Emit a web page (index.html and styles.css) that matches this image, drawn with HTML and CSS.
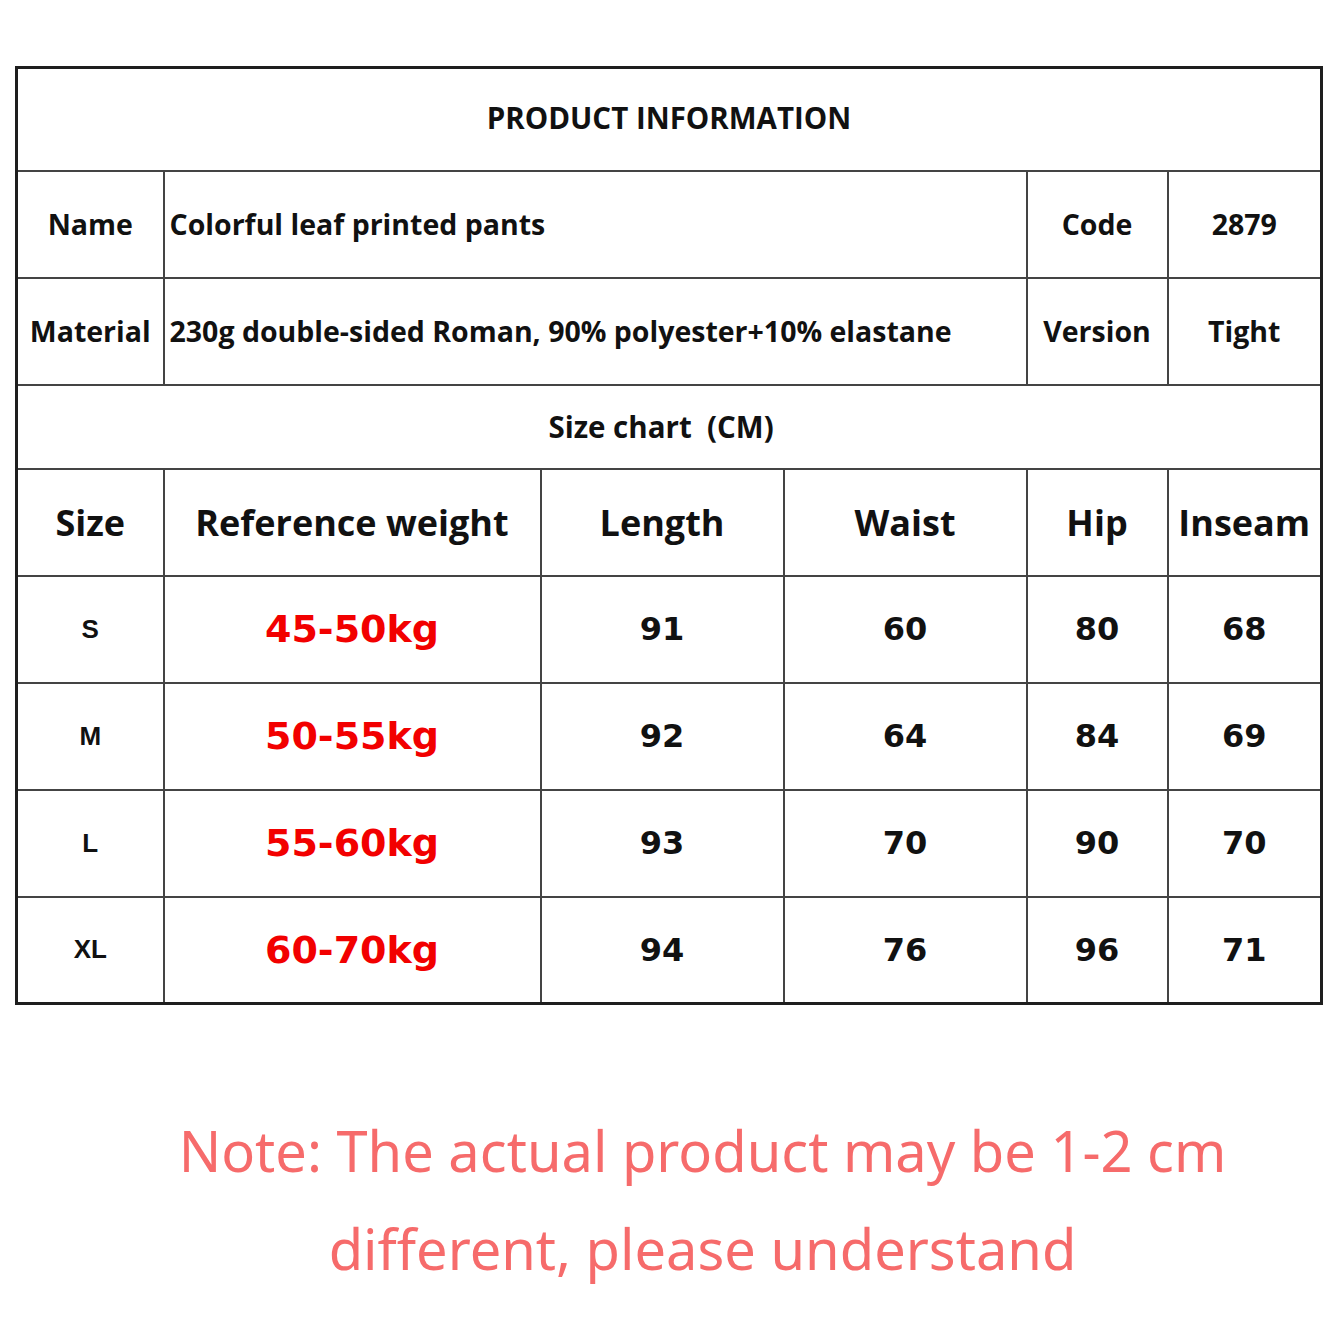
FILE: index.html
```html
<!DOCTYPE html>
<html>
<head>
<meta charset="utf-8">
<link rel="stylesheet" href="styles.css">
</head>
<body>
<div class="page">
<table class="chart">
<colgroup>
<col class="c1"><col class="c2"><col class="c3"><col class="c4"><col class="c5"><col class="c6">
</colgroup>
<tr class="r-title"><td colspan="6" class="title">PRODUCT INFORMATION</td></tr>
<tr class="r-info"><td class="lbl">Name</td><td colspan="3" class="val">Colorful leaf printed pants</td><td class="lbl">Code</td><td class="lbl">2879</td></tr>
<tr class="r-info"><td class="lbl">Material</td><td colspan="3" class="val">230g double-sided Roman, 90% polyester+10% elastane</td><td class="lbl">Version</td><td class="lbl">Tight</td></tr>
<tr class="r-sub"><td colspan="6" class="sub">Size chart&nbsp;&nbsp;(CM)</td></tr>
<tr class="r-head"><td>Size</td><td>Reference weight</td><td>Length</td><td>Waist</td><td>Hip</td><td>Inseam</td></tr>
<tr class="r-data"><td class="sz">S</td><td class="wt">45-50kg</td><td class="num">91</td><td class="num">60</td><td class="num">80</td><td class="num">68</td></tr>
<tr class="r-data"><td class="sz">M</td><td class="wt">50-55kg</td><td class="num">92</td><td class="num">64</td><td class="num">84</td><td class="num">69</td></tr>
<tr class="r-data"><td class="sz">L</td><td class="wt">55-60kg</td><td class="num">93</td><td class="num">70</td><td class="num">90</td><td class="num">70</td></tr>
<tr class="r-data"><td class="sz">XL</td><td class="wt">60-70kg</td><td class="num">94</td><td class="num">76</td><td class="num">96</td><td class="num">71</td></tr>
</table>
<p class="note">Note: The actual product may be 1-2 cm<br>different, please understand</p>
</div>
</body>
</html>
```
FILE: styles.css
```css
html, body { margin: 0; padding: 0; background: #fff; }
.page { padding: 66px 18px 0 15px; }
.chart {
  border-collapse: collapse;
  width: 1305px;
  table-layout: fixed;
  border: 3px solid #1e1e1e;
  font-family: "Open Sans", "Noto Sans", sans-serif;
  font-weight: 700;
  color: #111;
}
.c1 { width: 147px; }
.c2 { width: 377px; }
.c3 { width: 243px; }
.c4 { width: 243px; }
.c5 { width: 141px; }
.c6 { width: 154px; }
.chart td {
  border: 2px solid #444;
  text-align: center;
  vertical-align: middle;
  padding: 0;
  white-space: nowrap;
}
.r-title { height: 103px; }
.r-info { height: 107px; }
.r-sub { height: 84px; }
.r-head { height: 107px; }
.r-data { height: 107px; }
.title { font-size: 29.5px; padding-bottom: 4px !important; }
.lbl { font-size: 28.5px; }
.val { font-size: 28.5px; text-align: left !important; padding-left: 5px !important; }
.sub { font-size: 29.5px; padding-right: 16px !important; }
.r-head td { font-size: 36px; }
.sz { font-family: "Liberation Sans", Arial, sans-serif; font-size: 26px; }
.wt { font-family: "DejaVu Sans", "Liberation Sans", sans-serif; font-size: 38px; color: #f20000; }
.num { font-family: "DejaVu Sans", "Liberation Sans", sans-serif; font-size: 32px; }
.note {
  margin: 96px 0 0 0;
  padding-left: 68px;
  text-align: center;
  font-family: "Noto Sans", "Open Sans", sans-serif;
  font-weight: 400;
  font-size: 56px;
  line-height: 98px;
  color: #f66b6b;
}
```
